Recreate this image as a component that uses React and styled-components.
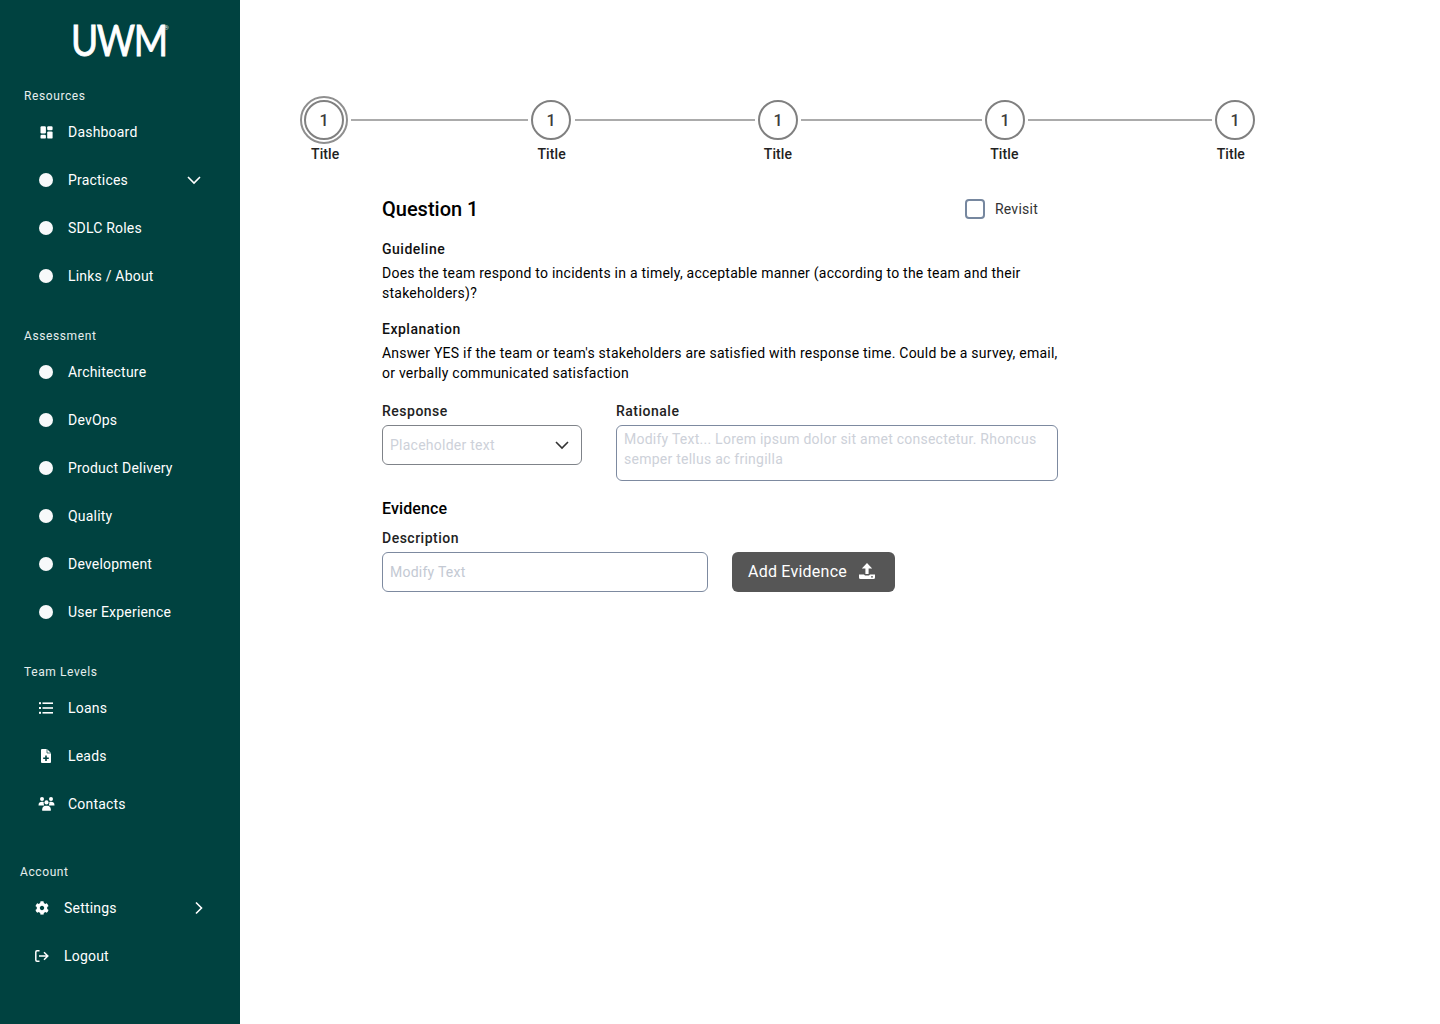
import React from "react";
import styled, { createGlobalStyle } from "styled-components";
import { FaCog } from "react-icons/fa";

const Global = createGlobalStyle`
  html, body { margin: 0; padding: 0; background: #fff; }
  body {
    font-family: Roboto, "Liberation Sans", sans-serif;
    color: #000;
  }
  * { box-sizing: border-box; }
`;

const Page = styled.div`
  display: flex;
  width: 1440px;
  min-height: 1024px;
`;

const Sidebar = styled.aside`
  width: 240px;
  flex: none;
  height: 1024px;
  background: #004240;
  color: #fff;
`;

const LogoBlock = styled.div`
  height: 84px;
  padding: 18px 0 0 71px;
  display: flex;
  align-items: flex-start;
`;

const LogoText = styled.span`
  display: block;
  width: 94px;
  font-family: Lato, sans-serif;
  font-size: 42px;
  line-height: 44px;
  font-weight: 400;
  letter-spacing: -1.5px;
  color: #fff;
  -webkit-text-stroke: 0.9px #fff;
  transform: scaleX(0.88);
  transform-origin: left center;
`;

const LogoMark = styled.sup`
  font-size: 6px;
  line-height: 8px;
  margin: 6px 0 0 -1px;
  color: #dfe8e8;
`;

const Section = styled.section`
  margin-bottom: ${(p) => p.$after || 24}px;
`;

const SectionLabel = styled.div`
  height: 24px;
  line-height: 24px;
  padding-left: ${(p) => p.$left || 24}px;
  font-size: 12px;
  font-weight: 400;
  letter-spacing: 0.6px;
  color: #e6eeee;
`;

const Item = styled.div`
  height: 48px;
  display: flex;
  align-items: center;
  padding-left: ${(p) => p.$left || 36}px;
  font-size: 14px;
  font-weight: 400;
  letter-spacing: 0.2px;
  color: #fff;
`;

const IconSlot = styled.span`
  width: 20px;
  height: 20px;
  flex: none;
  display: flex;
  align-items: center;
  justify-content: center;
  margin-right: 12px;
  color: #fff;
`;

const Dot = styled.span`
  width: 14px;
  height: 14px;
  border-radius: 50%;
  background: #f7f9fa;
`;

const ItemLabel = styled.span`
  flex: 1;
`;

const Caret = styled.svg`
  flex: none;
  width: 16px;
  height: 16px;
  margin-right: ${(p) => p.$right}px;
`;

const Main = styled.main`
  flex: 1;
  padding: 96px 0 0 60px;
`;

const Stepper = styled.div`
  width: 955px;
`;

const StepTrack = styled.div`
  display: flex;
  align-items: center;
  height: 48px;
`;

const Ring = styled.div`
  width: 48px;
  height: 48px;
  flex: none;
  display: flex;
  align-items: center;
  justify-content: center;
  border: 2px solid #8f8f8f;
  border-radius: 50%;
`;

const Circle = styled.div`
  width: 40px;
  height: 40px;
  flex: none;
  display: flex;
  align-items: center;
  justify-content: center;
  border: 2px solid #808080;
  border-radius: 50%;
  background: #fff;
  font-size: 16px;
  font-weight: 500;
  color: #3c3c3c;
`;

const Connector = styled.div`
  height: 2px;
  background: #ababab;
  flex: none;
  width: ${(p) => p.$w}px;
  margin: 0 3px 0 ${(p) => p.$ml || 3}px;
`;

const StepTitles = styled.div`
  display: flex;
  justify-content: space-between;
  padding: 0 10px 0 11px;
  height: 20px;
  line-height: 20px;
  font-size: 14px;
  font-weight: 500;
  letter-spacing: 0.1px;
  color: #222;
`;

const Content = styled.div`
  width: 678px;
  margin: 31px 0 0 82px;
`;

const QuestionHead = styled.div`
  width: 656px;
  display: flex;
  align-items: center;
  justify-content: space-between;
  height: 28px;
`;

const QuestionTitle = styled.h1`
  margin: 0;
  font-size: 20px;
  line-height: 28px;
  font-weight: 500;
  letter-spacing: 0;
  color: #000;
`;

const Revisit = styled.label`
  display: flex;
  align-items: center;
  gap: 10px;
  font-size: 14px;
  letter-spacing: 0.25px;
  color: #333;
`;

const CheckBox = styled.span`
  width: 20px;
  height: 20px;
  border: 2px solid #76879f;
  border-radius: 4px;
`;

const SubHead = styled.h2`
  margin: 16px 0 4px;
  font-size: 14px;
  line-height: 20px;
  font-weight: 500;
  letter-spacing: 0.5px;
  color: #111;
`;

const Body = styled.p`
  margin: 0;
  font-size: 14px;
  line-height: 20px;
  font-weight: 400;
  letter-spacing: 0.24px;
  color: #000;
`;

const FieldRow = styled.div`
  display: flex;
  align-items: flex-start;
  gap: ${(p) => p.$gap}px;
  margin-top: ${(p) => p.$top || 0}px;
`;

const Field = styled.div`
  width: ${(p) => p.$w}px;
  flex: none;
`;

const FieldLabel = styled.div`
  font-size: 14px;
  line-height: 20px;
  font-weight: 500;
  letter-spacing: 0.5px;
  color: #222;
  margin-bottom: 4px;
`;

const Control = styled.div`
  height: ${(p) => p.$h || 40}px;
  display: flex;
  align-items: ${(p) => (p.$multi ? "flex-start" : "center")};
  justify-content: space-between;
  padding: ${(p) => (p.$multi ? "3px 7px" : "0 7px")};
  border: 1px solid ${(p) => p.$border || "#7d8aa0"};
  border-radius: 6px;
  background: #fff;
  font-size: 14px;
  line-height: 20px;
  letter-spacing: 0.25px;
  color: ${(p) => p.$text || "#cdd1d9"};
`;

const EvidenceHead = styled.h2`
  margin: 16px 0 7px;
  font-size: 16px;
  line-height: 24px;
  font-weight: 500;
  letter-spacing: 0.1px;
  color: #000;
`;

const AddButton = styled.button`
  height: 40px;
  width: 163px;
  margin-top: 24px;
  padding: 0 0 2px 16px;
  display: flex;
  align-items: center;
  gap: 12px;
  border: 0;
  border-radius: 6px;
  background: #565656;
  color: #fff;
  font-family: inherit;
  font-size: 16px;
  font-weight: 400;
  letter-spacing: 0.23px;
`;

const ChevronDown = ({ right, color = "#fff", width = 1.6 }) => (
  <Caret $right={right} viewBox="0 0 16 16" fill="none" stroke={color} strokeWidth={width}>
    <path d="M2 5l6 6 6-6" />
  </Caret>
);

const ChevronRight = () => (
  <Caret $right={33} viewBox="0 0 16 16" fill="none" stroke="#fff" strokeWidth="1.6">
    <path d="M5 2.500l5.500 5.500-5.500 5.500" />
  </Caret>
);

const DashIcon = () => (
  <svg width="13" height="13" viewBox="0 0 13 13" fill="#fff">
    <rect x="0.5" y="0.2" width="5.4" height="7.2" rx="1.2" />
    <rect x="7.2" y="0.2" width="5.4" height="4" rx="1.2" />
    <rect x="0.5" y="8.8" width="5.4" height="3.8" rx="1.2" />
    <rect x="7.2" y="5.4" width="5.4" height="7.2" rx="1.2" />
  </svg>
);

const ListIcon = () => (
  <svg width="14" height="12" viewBox="0 0 14 12" fill="#fff">
    <rect x="0" y="0.2" width="2" height="2" />
    <rect x="0" y="5" width="2" height="2" />
    <rect x="0" y="9.8" width="2" height="2" />
    <rect x="3.5" y="0.4" width="10.5" height="1.6" />
    <rect x="3.5" y="5.2" width="10.5" height="1.6" />
    <rect x="3.5" y="10" width="10.5" height="1.6" />
  </svg>
);

const FilePlusIcon = () => (
  <svg width="10" height="14" viewBox="0 0 10 14">
    <path fill="#fff" d="M1 0h5L10 4v9a1 1 0 0 1-1 1H1a1 1 0 0 1-1-1V1a1 1 0 0 1 1-1z" />
    <path fill="#004240" d="M4.200 6.400h1.600v2h2V10h-2v2H4.200v-2h-2V8.400h2z" />
    <path fill="none" stroke="#004240" strokeWidth=".7" d="M6 0v4h4" />
  </svg>
);

const PeopleIcon = () => (
  <svg width="17" height="14" viewBox="0 0 17 14" fill="#fff">
    <circle cx="4" cy="2" r="2" />
    <circle cx="13" cy="2" r="2" />
    <circle cx="8.500" cy="5.400" r="2.100" />
    <path d="M0.500 8.400C.5 5.600 2 4.800 4 4.800c.8 0 1.300.1 1.800.4-.3.9-.1 2 .5 3.200z" />
    <path d="M16.500 8.400c0-2.800-1.500-3.600-3.500-3.600-.8 0-1.300.1-1.800.4.3.9.1 2-.5 3.200z" />
    <path d="M4.200 13.800v-1.600c0-2 1.600-3.400 3.400-3.400h1.800c1.800 0 3.400 1.400 3.400 3.400v1.600z" />
  </svg>
);

const LogoutIcon = () => (
  <svg width="14" height="12" viewBox="0 0 14 12" fill="none" stroke="#fff" strokeWidth="1.5">
    <path d="M4.500 .8H2a1.200 1.200 0 0 0-1.200 1.200v8A1.200 1.200 0 0 0 2 11.200h2.500" />
    <path d="M4 6h8.800M9 2.300 12.800 6 9 9.700" />
  </svg>
);

const UploadIcon = () => (
  <svg width="16" height="16" viewBox="0 0 16 16" fill="#fff">
    <path d="M8 0 13.200 5.400H9.600V11H6.400V5.400H2.800z" />
    <path d="M0 11.400h5c.4 1 1.500 1.200 3 1.200s2.600-.2 3-1.200h5V14.500A1.500 1.500 0 0 1 14.500 16H1.500A1.500 1.500 0 0 1 0 14.500z" />
    <circle cx="13" cy="13.800" r=".9" fill="#565656" />
  </svg>
);

const NavRow = ({ icon, label, children, left }) => (
  <Item $left={left}>
    <IconSlot>{icon || <Dot />}</IconSlot>
    <ItemLabel>{label}</ItemLabel>
    {children}
  </Item>
);

export default function App() {
  return (
    <Page>
      <Global />
      <Sidebar>
        <LogoBlock>
          <LogoText>UWM</LogoText>
          <LogoMark>®</LogoMark>
        </LogoBlock>
        <Section>
          <SectionLabel>Resources</SectionLabel>
          <NavRow icon={<DashIcon />} label="Dashboard" />
          <NavRow label="Practices">
            <ChevronDown right={38} />
          </NavRow>
          <NavRow label="SDLC Roles" />
          <NavRow label="Links / About" />
        </Section>
        <Section>
          <SectionLabel>Assessment</SectionLabel>
          <NavRow label="Architecture" />
          <NavRow label="DevOps" />
          <NavRow label="Product Delivery" />
          <NavRow label="Quality" />
          <NavRow label="Development" />
          <NavRow label="User Experience" />
        </Section>
        <Section $after={32}>
          <SectionLabel>Team Levels</SectionLabel>
          <NavRow icon={<ListIcon />} label="Loans" />
          <NavRow icon={<FilePlusIcon />} label="Leads" />
          <NavRow icon={<PeopleIcon />} label="Contacts" />
        </Section>
        <Section>
          <SectionLabel $left={20}>Account</SectionLabel>
          <NavRow left={32} icon={<FaCog size={14} />} label="Settings">
            <ChevronRight />
          </NavRow>
          <NavRow left={32} icon={<LogoutIcon />} label="Logout" />
        </Section>
      </Sidebar>
      <Main>
        <Stepper>
          <StepTrack>
            <Ring>
              <Circle>1</Circle>
            </Ring>
            <Connector $w={177} />
            <Circle>1</Circle>
            <Connector $w={180} $ml={4} />
            <Circle>1</Circle>
            <Connector $w={181} />
            <Circle>1</Circle>
            <Connector $w={184} />
            <Circle>1</Circle>
          </StepTrack>
          <StepTitles>
            <span>Title</span>
            <span>Title</span>
            <span>Title</span>
            <span>Title</span>
            <span>Title</span>
          </StepTitles>
        </Stepper>
        <Content>
          <QuestionHead>
            <QuestionTitle>Question 1</QuestionTitle>
            <Revisit>
              <CheckBox />
              Revisit
            </Revisit>
          </QuestionHead>
          <SubHead>Guideline</SubHead>
          <Body>
            Does the team respond to incidents in a timely, acceptable manner (according to the team and their
            stakeholders)?
          </Body>
          <SubHead>Explanation</SubHead>
          <Body>
            Answer YES if the team or team's stakeholders are satisfied with response time. Could be a survey, email,
            or verbally communicated satisfaction
          </Body>
          <FieldRow $gap={34} $top={18}>
            <Field $w={200}>
              <FieldLabel>Response</FieldLabel>
              <Control $border="#7f8389">
                Placeholder text
                <ChevronDown right={4} color="#333" width={1.6} />
              </Control>
            </Field>
            <Field $w={442}>
              <FieldLabel>Rationale</FieldLabel>
              <Control $h={56} $multi>
                Modify Text... Lorem ipsum dolor sit amet consectetur. Rhoncus semper tellus ac fringilla
              </Control>
            </Field>
          </FieldRow>
          <EvidenceHead>Evidence</EvidenceHead>
          <FieldRow $gap={24}>
            <Field $w={326}>
              <FieldLabel>Description</FieldLabel>
              <Control $text="#c3c9d3">Modify Text</Control>
            </Field>
            <AddButton>
              Add Evidence
              <UploadIcon />
            </AddButton>
          </FieldRow>
        </Content>
      </Main>
    </Page>
  );
}
